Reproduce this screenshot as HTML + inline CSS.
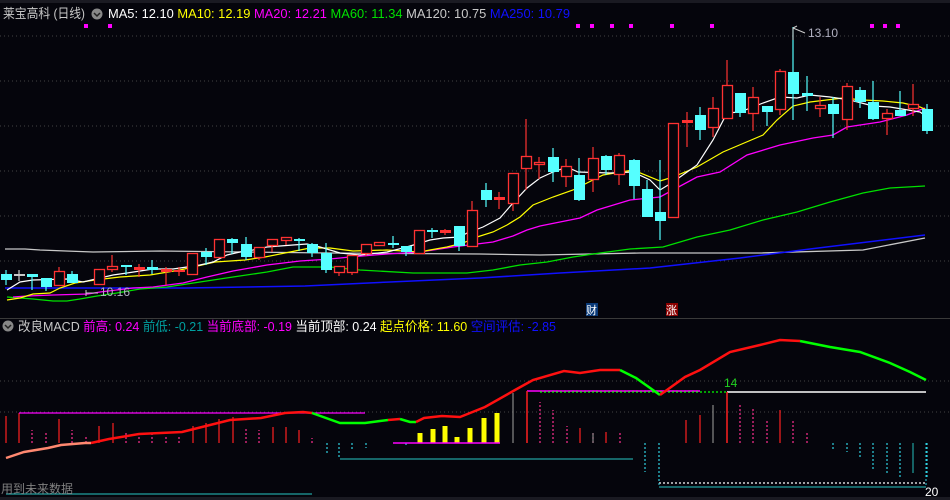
<!DOCTYPE html>
<html><head><meta charset="utf-8"><style>
html,body{margin:0;padding:0;background:#05050c;width:950px;height:500px;overflow:hidden}
svg{display:block}
text{font-family:"Liberation Sans","Noto Sans CJK SC",sans-serif}
</style></head><body>
<svg id="s" width="950" height="500" xmlns="http://www.w3.org/2000/svg">
<rect width="950" height="500" fill="#05050c"/>
<rect x="0" y="0" width="950" height="3" fill="#1a1a22"/>
<g id="grid" stroke="#444" stroke-dasharray="1,3" stroke-width="1"></g>
<g id="g"></g>
<text x="3" y="18" font-size="13" fill="#c8c8c8" textLength="82" lengthAdjust="spacingAndGlyphs">莱宝高科 (日线)</text>
<circle cx="97" cy="14" r="5.5" fill="#888"/><path d="M94 13 l3 3 l3 -3" stroke="#222" stroke-width="1.5" fill="none"/>
<text x="108" y="18" font-size="13" textLength="462" lengthAdjust="spacingAndGlyphs"><tspan fill="#ffffff">MA5: 12.10 </tspan><tspan fill="#ffff00">MA10: 12.19 </tspan><tspan fill="#ff00ff">MA20: 12.21 </tspan><tspan fill="#00e000">MA60: 11.34 </tspan><tspan fill="#c8c8c8">MA120: 10.75 </tspan><tspan fill="#1010ff">MA250: 10.79</tspan></text>
<text x="808" y="37" font-size="12" fill="#b0b0c0">13.10</text>
<path d="M793 28 V40 M793 28 l4 -2 M793 28 l12 5" stroke="#ccc" fill="none"/>
<text x="100" y="296" font-size="12" fill="#b0b0c0">10.16</text>
<path d="M86 290 V296 M86 293 H98" stroke="#ccc" fill="none"/>
<rect x="586" y="303" width="12" height="13" fill="#0a3a78"/><text x="586" y="314" font-size="11" fill="#fff">财</text>
<rect x="666" y="303" width="12" height="13" fill="#8a0000"/><text x="666" y="314" font-size="11" fill="#fff">涨</text>
<rect x="0" y="318" width="950" height="1" fill="#3a3a3a"/>
<circle cx="8" cy="326" r="5.5" fill="#888"/><path d="M5 325 l3 3 l3 -3" stroke="#222" stroke-width="1.5" fill="none"/>
<text x="18" y="331" font-size="13" textLength="538" lengthAdjust="spacingAndGlyphs"><tspan fill="#c8c8c8">改良MACD </tspan><tspan fill="#ff00ff">前高: 0.24 </tspan><tspan fill="#00a0a0">前低: -0.21 </tspan><tspan fill="#ff00ff">当前底部: -0.19 </tspan><tspan fill="#ffffff">当前顶部: 0.24 </tspan><tspan fill="#ffff00">起点价格: 11.60 </tspan><tspan fill="#1010ff">空间评估: -2.85</tspan></text>
<text x="724" y="387" font-size="12" fill="#20d020">14</text>
<text x="925" y="496" font-size="12" fill="#fff">20</text>
<text x="1" y="493" font-size="12" fill="#808080">用到未来数据</text>
<rect x="0" y="497" width="950" height="3" fill="#1a1a22"/>
</svg>
<script>
var NS="http://www.w3.org/2000/svg",g=document.getElementById('g'),gr=document.getElementById('grid');
function el(t,a,p){var e=document.createElementNS(NS,t);for(var k in a)e.setAttribute(k,a[k]);(p||g).appendChild(e);return e;}
[36,81,126,171,216,261,381,412].forEach(function(y){el('line',{x1:0,x2:950,y1:y,y2:y},gr);});
[86,110,578,592,612,631,672,712,872,885,898].forEach(function(x){el('rect',{x:x-2,y:24,width:4,height:4,fill:'#ff00ff'});});
function pl(pts,c,w,dash){var a={points:pts.map(function(p){return p.join(',')}).join(' '),fill:'none',stroke:c,'stroke-width':w||1};if(dash)a['stroke-dasharray']=dash;el('polyline',a);}
pl([[5,249],[25,249],[40,250],[66,251],[93,252],[160,251],[330,253],[480,254],[540,255],[640,253],[760,253],[863,250],[925,238]],'#c8c8c8',1.3);
pl([[5,288],[185,288],[305,286],[390,282],[480,278],[560,273],[650,268],[740,258],[810,249],[925,235]],'#1010ff',1.5);
pl([[7,297],[33,299],[53,301],[67,301],[80,299],[97,296],[117,293],[140,289],[167,287],[200,282],[233,277],[267,272],[293,267],[330,267],[360,270],[413,273],[467,273],[493,270],[520,265],[547,262],[573,257],[600,253],[630,249],[663,247],[697,237],[730,230],[763,220],[797,212],[830,202],[863,193],[890,188],[925,186]],'#00e000',1.3);
pl([[13,297],[27,296],[53,295],[88,294],[100,292],[133,288],[153,287],[183,283],[207,277],[233,271],[267,265],[300,261],[330,259],[350,257],[387,254],[420,252],[453,247],[477,244],[493,242],[513,236],[527,230],[540,226],[560,222],[580,218],[597,210],[630,200],[660,197],[697,177],[720,172],[747,155],[780,145],[813,138],[833,135],[847,127],[880,122],[907,115],[925,108]],'#ff00ff',1.3);
pl([[7,300],[20,298],[33,294],[50,293],[60,288],[75,283],[95,280],[120,277],[150,275],[180,270],[215,262],[245,260],[265,257],[290,252],[310,248],[330,248],[353,251],[387,250],[420,252],[430,250],[447,247],[463,243],[477,237],[493,232],[507,225],[520,217],[533,205],[553,197],[573,190],[587,183],[603,175],[633,170],[660,181],[673,177],[697,167],[723,152],[763,135],[777,120],[793,106],[810,102],[843,98],[863,100],[883,101],[903,103],[920,107],[927,110]],'#ffff00',1.2);
pl([[7,290],[20,282],[33,280],[67,279],[83,282],[100,278],[113,275],[127,273],[140,271],[153,269],[173,269],[187,267],[200,265],[213,262],[227,255],[240,252],[253,250],[267,247],[293,245],[307,244],[320,247],[340,253],[360,255],[387,252],[403,248],[417,244],[430,240],[443,238],[460,237],[467,233],[483,227],[500,218],[513,203],[527,188],[540,178],[553,172],[567,167],[578,172],[610,173],[633,172],[650,180],[660,190],[673,182],[697,165],[713,140],[727,113],[740,112],[763,103],[780,97],[797,98],[810,95],[830,97],[850,100],[873,106],[890,107],[920,112],[927,117]],'#ffffff',1.2);
var C=[[6,274,280,270,285,'c'],[19,275,275,270,281,'g'],[32,275,277,274,290,'c'],[46,278,287,278,291,'c'],[59,271,286,267,286,'r'],[72,274,283,271,283,'c'],[99,269,285,269,285,'r'],[112,266,270,255,272,'r'],[126,266,266,265,275,'c'],[139,268,270,264,277,'r'],[152,268,270,260,274,'c'],[166,270,272,267,285,'r'],[179,271,272,267,276,'r'],[192,253,275,253,275,'r'],[206,252,257,248,265,'c'],[219,239,258,239,258,'r'],[232,239,243,238,254,'c'],[246,244,257,237,260,'c'],[259,247,258,247,260,'r'],[272,239,246,239,252,'r'],[286,237,241,237,245,'r'],[299,240,240,238,251,'c'],[312,244,253,243,257,'c'],[326,253,270,243,273,'c'],[339,266,273,266,276,'r'],[352,255,273,255,275,'r'],[366,244,254,244,256,'r'],[379,242,246,242,246,'r'],[393,244,244,236,248,'c'],[406,246,252,246,256,'c'],[419,230,254,230,254,'r'],[432,231,231,228,238,'c'],[445,231,233,229,235,'r'],[459,226,246,226,251,'c'],[472,210,247,201,247,'r'],[486,190,200,183,207,'c'],[499,198,200,192,209,'r'],[513,173,204,173,211,'r'],[526,156,169,119,190,'r'],[539,162,165,157,179,'r'],[553,157,172,148,182,'c'],[566,166,177,159,187,'r'],[579,175,200,158,201,'c'],[593,158,180,147,192,'r'],[606,156,170,155,175,'c'],[619,155,175,153,185,'r'],[634,160,186,159,199,'c'],[647,189,217,180,217,'c'],[660,212,221,160,240,'c'],[673,123,218,123,218,'r'],[687,121,123,112,147,'r'],[700,115,130,107,140,'c'],[713,108,128,97,137,'r'],[727,85,119,60,119,'r'],[740,93,113,93,117,'c'],[753,97,114,87,131,'r'],[767,106,112,106,126,'c'],[780,71,110,69,115,'r'],[793,72,94,27,120,'c'],[807,94,96,76,111,'c'],[820,105,109,97,117,'r'],[833,104,114,97,138,'c'],[847,86,120,83,130,'r'],[860,90,102,87,108,'c'],[873,102,119,81,120,'c'],[887,113,119,109,135,'r'],[900,110,116,91,116,'c'],[913,104,109,84,116,'r'],[927,109,131,104,134,'c']];
C.forEach(function(c){var col=c[5]=='c'?'#55ffff':c[5]=='r'?'#ff3232':'#c8c8c8';
el('line',{x1:c[0],x2:c[0],y1:c[3],y2:c[4],stroke:col,'stroke-width':1.2});
var h=c[2]-c[1];
if(h<=2){el('rect',{x:c[0]-5,y:c[1]-1,width:11,height:Math.max(2,h+1),fill:col});}
else if(c[5]=='r'){el('rect',{x:c[0]-4.5,y:c[1]+.5,width:10,height:h-1,fill:'#05050c',stroke:col,'stroke-width':1.3});}
else el('rect',{x:c[0]-5,y:c[1],width:11,height:h,fill:col});});
var Z=443;
function bar(x,y,col,dash,w){el('line',{x1:x,x2:x,y1:Z,y2:y,stroke:col,'stroke-width':w||1.2,'stroke-dasharray':dash||''});}
[[6,416,1],[19,413,1],[32,430,0],[46,432,0],[59,419,1],[72,430,0],[86,435,0],[99,426,1],[113,423,1],[126,433,0],[139,432,0],[152,432,0],[166,437,0],[179,437,0],[193,426,1],[206,423,1],[219,419,1],[233,417,1],[246,428,0],[259,430,0],[273,427,1],[286,427,1],[299,430,1],[312,438,0],[540,402,0],[553,410,0],[567,426,0],[580,428,1],[593,433,0],[606,432,1],[620,433,0],[686,420,1],[700,415,1],[740,405,0],[753,407,0],[767,420,0],[780,410,1],[793,420,0],[807,431,0]].forEach(function(b){bar(b[0],b[1],b[2]?'#ff2020':'#ff3090',b[2]?'':'2,2');});
bar(513,393,'#888');bar(713,405,'#888');bar(593,433,'#888');
[[327,455],[339,457],[352,451],[366,448],[406,446],[645,472],[659,483],[833,451],[847,452],[860,459],[873,470],[887,474],[900,478],[927,478]].forEach(function(b){bar(b[0],b[1],'#30d0e0','2,2');});
bar(913,473,'#20a0a0');
[[420,433],[433,429],[445,426],[457,437],[470,428],[484,418],[497,413]].forEach(function(b){el('rect',{x:b[0]-2.5,y:b[1],width:5,height:Z-b[1],fill:'#ffff00'});});
el('line',{x1:393,x2:500,y1:443,y2:443,stroke:'#ff00ff','stroke-width':1.5});
el('line',{x1:19,x2:365,y1:413,y2:413,stroke:'#ff00ff','stroke-width':1.3});
el('line',{x1:527,x2:700,y1:391,y2:391,stroke:'#ff00ff','stroke-width':1.5});
el('line',{x1:540,x2:727,y1:392,y2:392,stroke:'#00ff00','stroke-width':1.3,'stroke-dasharray':'2,2'});
el('line',{x1:727,x2:926,y1:392,y2:392,stroke:'#ffffff','stroke-width':1.5});
el('line',{x1:527,x2:527,y1:391,y2:443,stroke:'#ff2020','stroke-width':1.5});
el('line',{x1:727,x2:727,y1:392,y2:443,stroke:'#ff2020','stroke-width':1.5});
el('line',{x1:340,x2:633,y1:459,y2:459,stroke:'#20a0a0','stroke-width':1.3});
el('line',{x1:6,x2:312,y1:494,y2:494,stroke:'#20a0a0','stroke-width':1.3});
el('line',{x1:659,x2:926,y1:487,y2:487,stroke:'#20a0a0','stroke-width':1.3});
el('line',{x1:659,x2:926,y1:483,y2:483,stroke:'#ffffff','stroke-width':1.3,'stroke-dasharray':'2,2'});
el('line',{x1:659,x2:659,y1:443,y2:487,stroke:'#30d0e0','stroke-width':1,'stroke-dasharray':'2,2'});
el('line',{x1:926,x2:926,y1:443,y2:487,stroke:'#30d0e0','stroke-width':1,'stroke-dasharray':'2,2'});
pl([[6,458],[24,452],[48,448],[61,445],[85,443],[91,443]],'#ff8870',2.5);
pl([[91,443],[109,439],[139,434],[182,432],[206,426],[230,420],[261,418],[285,413],[303,412],[312,413]],'#ff1010',2.5);
pl([[312,413],[340,423],[365,423],[380,421],[388,420]],'#00ff00',2.5);
pl([[388,420],[400,419]],'#ff1010',2.5);
pl([[400,419],[410,422],[416,422]],'#00ff00',2.5);
pl([[416,422],[424,418],[442,416],[460,417],[485,407],[515,390],[533,380],[564,371],[580,373],[600,370],[620,370]],'#ff1010',2.5);
pl([[620,370],[636,378],[660,395]],'#00ff00',2.5);
pl([[660,395],[685,377],[700,370],[730,352],[760,345],[780,340],[800,341]],'#ff1010',2.5);
pl([[800,341],[830,347],[860,352],[890,363],[910,372],[926,380]],'#00ff00',2.5);
</script>
</body></html>
